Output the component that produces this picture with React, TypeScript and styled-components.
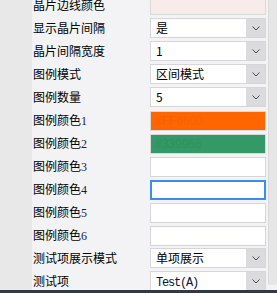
import { FC } from "react";
import styled, { createGlobalStyle, css } from "styled-components";

const GlobalStyle = createGlobalStyle`
  html, body {
    margin: 0;
    padding: 0;
    background: #f3f3f5;
  }
  body {
    font-family: "Noto Sans CJK SC", "Liberation Sans", sans-serif;
    font-size: 12px;
    color: #000;
  }
`;

type Field =
  | { kind: "select"; value: string; mono?: boolean }
  | { kind: "color"; color: string; text: string; textColor: string }
  | { kind: "input"; focused?: boolean };

interface Row {
  label: string;
  num?: string;
  field: Field;
}

const rows: Row[] = [
  { label: "晶片边线颜色", field: { kind: "color", color: "#f8eceb", text: "", textColor: "#f8eceb" } },
  { label: "显示晶片间隔", field: { kind: "select", value: "是" } },
  { label: "晶片间隔宽度", field: { kind: "select", value: "1" } },
  { label: "图例模式", field: { kind: "select", value: "区间模式" } },
  { label: "图例数量", field: { kind: "select", value: "5" } },
  { label: "图例颜色", num: "1", field: { kind: "color", color: "#ff6600", text: "#FF6600", textColor: "#f56200" } },
  { label: "图例颜色", num: "2", field: { kind: "color", color: "#339966", text: "#339966", textColor: "#2e915f" } },
  { label: "图例颜色", num: "3", field: { kind: "input" } },
  { label: "图例颜色", num: "4", field: { kind: "input", focused: true } },
  { label: "图例颜色", num: "5", field: { kind: "input" } },
  { label: "图例颜色", num: "6", field: { kind: "input" } },
  { label: "测试项展示模式", field: { kind: "select", value: "单项展示" } },
  { label: "测试项", field: { kind: "select", value: "Test(A)", mono: true } },
];

const Chevron: FC = () => (
  <svg width="8" height="5" viewBox="0 0 8 5">
    <polyline points="0.5,0.5 4,4 7.5,0.5" fill="none" stroke="#4a4a4a" strokeWidth="1" />
  </svg>
);

const FieldView: FC<{ field: Field }> = ({ field }) => {
  if (field.kind === "select") {
    return (
      <SelectBox>
        <SelectText>{field.mono ? <Mono>{field.value}</Mono> : field.value}</SelectText>
        <DropButton>
          <Chevron />
        </DropButton>
      </SelectBox>
    );
  }
  if (field.kind === "color") {
    return (
      <ColorBox style={{ background: field.color, color: field.textColor }}>
        {field.text}
      </ColorBox>
    );
  }
  return <InputBox $focused={!!field.focused} />;
};

export default function App() {
  return (
    <>
      <GlobalStyle />
      <Window>
        <Body>
          <SideStrip />
          <Content>
            <List>
              {rows.map((row, i) => (
                <RowLine key={i}>
                  <Label>
                    {row.label}
                    {row.num && <Num>{row.num}</Num>}
                  </Label>
                  <FieldView field={row.field} />
                </RowLine>
              ))}
            </List>
          </Content>
          <ScrollTrack>
            <ScrollThumb />
          </ScrollTrack>
        </Body>
        <BottomBar />
      </Window>
    </>
  );
}

const Window = styled.div`
  width: 277px;
  height: 293px;
  display: flex;
  flex-direction: column;
  overflow: hidden;
`;

const Body = styled.div`
  height: 290px;
  display: flex;
  overflow: hidden;
`;

const SideStrip = styled.div`
  width: 32px;
  flex-shrink: 0;
  background: #e8e8e8;
`;

const Content = styled.div`
  width: 236px;
  flex-shrink: 0;
  background: #f3f3f5;
  overflow: hidden;
`;

const List = styled.div`
  display: flex;
  flex-direction: column;
  gap: 3px;
  margin-top: -5px;
  padding-right: 2px;
`;

const RowLine = styled.div`
  height: 20px;
  display: grid;
  grid-template-columns: 118px 116px;
  align-items: center;
`;

const Label = styled.div`
  padding-left: 1px;
  font-size: 12px;
  line-height: 20px;
  white-space: nowrap;
  color: #000;
`;

const Num = styled.span`
  font-family: "Liberation Serif", serif;
  font-size: 12px;
  color: #1a1a40;
`;

const fieldBase = css`
  box-sizing: border-box;
  height: 20px;
  width: 116px;
  border: 1px solid #d6d6d8;
  background: #fff;
`;

const SelectBox = styled.div`
  ${fieldBase};
  display: flex;
  align-items: stretch;
`;

const SelectText = styled.div`
  flex: 1;
  padding-left: 5px;
  font-size: 12px;
  line-height: 18px;
  white-space: nowrap;
  overflow: hidden;
`;

const Mono = styled.span`
  font-family: "Liberation Mono", monospace;
  font-size: 12px;
  letter-spacing: -1.2px;
  color: #101030;
`;

const DropButton = styled.div`
  width: 19px;
  background: #dbdbde;
  display: flex;
  align-items: center;
  justify-content: center;
  padding-top: 1px;
`;

const ColorBox = styled.div`
  ${fieldBase};
  border-color: #d9d9d9;
  padding-left: 4px;
  font-family: "Liberation Sans", sans-serif;
  font-size: 12px;
  line-height: 18px;
  white-space: nowrap;
  overflow: hidden;
`;

const InputBox = styled.div<{ $focused: boolean }>`
  ${fieldBase};
  ${({ $focused }) =>
    $focused &&
    css`
      border: 2px solid #3a8cef;
    `}
`;

const ScrollTrack = styled.div`
  flex: 1;
  display: flex;
  flex-direction: column;
  background: #f3f3f5;
`;

const ScrollThumb = styled.div`
  height: 285px;
  background: #e6e6e6;
  border-left: 1px solid #d9d9d9;
  border-bottom-left-radius: 2px;
  border-bottom-right-radius: 2px;
`;

const BottomBar = styled.div`
  height: 3px;
  background: #2c3a4a;
`;
